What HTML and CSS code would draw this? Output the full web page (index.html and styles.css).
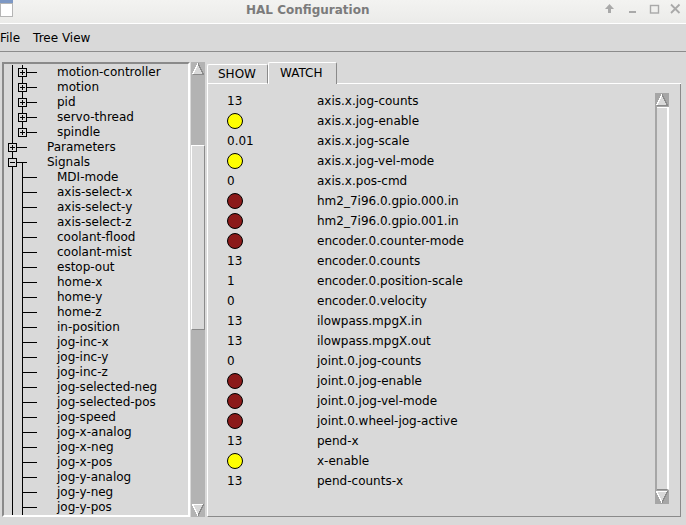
FILE: index.html
```html
<!DOCTYPE html>
<html lang="en">
<head>
    <meta charset="UTF-8">
    <title>HAL Configuration</title>
    <link rel="stylesheet" href="styles.css">
</head>
<body>
    <svg class="defs" width="0" height="0">
        <defs>
            <!-- tree connector pieces, one row = 15px -->
            <symbol id="l2" viewBox="0 0 53 15">
                <path d="M8.5 0V15M18.5 0V15M22 7.5H33" stroke="#000"/>
                <rect x="14.5" y="3.5" width="8" height="8" fill="#d9d9d9" stroke="#000"/>
                <path d="M16 7.5H21M18.5 5V10" stroke="#000"/>
            </symbol>
            <symbol id="l2last" viewBox="0 0 53 15">
                <path d="M8.5 0V15M18.5 0V7.5M22 7.5H33" stroke="#000"/>
                <rect x="14.5" y="3.5" width="8" height="8" fill="#d9d9d9" stroke="#000"/>
                <path d="M16 7.5H21M18.5 5V10" stroke="#000"/>
            </symbol>
            <symbol id="l1plus" viewBox="0 0 43 15">
                <path d="M8.5 0V15M12 7.5H23" stroke="#000"/>
                <rect x="4.5" y="3.5" width="8" height="8" fill="#d9d9d9" stroke="#000"/>
                <path d="M6 7.5H11M8.5 5V10" stroke="#000"/>
            </symbol>
            <symbol id="l1minus" viewBox="0 0 43 15">
                <path d="M8.5 0V15M12 7.5H23M18.5 7.5V15" stroke="#000"/>
                <rect x="4.5" y="3.5" width="8" height="8" fill="#d9d9d9" stroke="#000"/>
                <path d="M6 7.5H11" stroke="#000"/>
            </symbol>
            <symbol id="leaf" viewBox="0 0 53 15">
                <path d="M8.5 0V15M18.5 0V15M18.5 7.5H33" stroke="#000"/>
            </symbol>
            <symbol id="up" viewBox="0 0 14 14">
                <polygon points="7,1.5 1.5,12.5 12.5,12.5" fill="#d9d9d9"/>
                <path d="M1.5 12.5L7 1.5" stroke="#fff" fill="none"/>
                <path d="M7 1.5L12.5 12.5H1.5" stroke="#8a8a8a" fill="none"/>
            </symbol>
            <symbol id="down" viewBox="0 0 14 14">
                <polygon points="1.5,1.5 12.5,1.5 7,12.5" fill="#d9d9d9"/>
                <path d="M7 12.5L1.5 1.5H12.5" stroke="#fff" fill="none"/>
                <path d="M12.5 1.5L7 12.5" stroke="#8a8a8a" fill="none"/>
            </symbol>
        </defs>
    </svg>

    <div class="titlebar">
        <svg class="appicon" width="13" height="17" viewBox="0 0 13 17">
            <rect x="0" y="0" width="13" height="3" fill="#7d98c4"/>
            <rect x="0.5" y="3.5" width="12" height="13" fill="#fff" stroke="#b5b5b5"/>
        </svg>
        <div class="title">HAL Configuration</div>
        <svg class="wbtns" width="80" height="18" viewBox="0 0 80 18">
            <polygon points="6.5,4 2,9 11,9" fill="#a9a9a9"/>
            <rect x="5" y="9" width="3" height="4" fill="#a9a9a9"/>
            <rect x="26" y="11" width="7" height="2" fill="#a9a9a9"/>
            <rect x="47.5" y="5.5" width="8" height="7.5" fill="none" stroke="#a9a9a9" stroke-width="1.4"/>
            <path d="M68 4.5L76.5 13M76.5 4.5L68 13" stroke="#a9a9a9" stroke-width="1.8"/>
        </svg>
    </div>

    <div class="menubar">
        <span class="menu-file">File</span>
        <span class="menu-tree">Tree View</span>
    </div>

    <div class="main">
        <div class="tree">
            <div class="node"><svg class="w2"><use href="#l2"/></svg>motion-controller</div>
            <div class="node"><svg class="w2"><use href="#l2"/></svg>motion</div>
            <div class="node"><svg class="w2"><use href="#l2"/></svg>pid</div>
            <div class="node"><svg class="w2"><use href="#l2"/></svg>servo-thread</div>
            <div class="node"><svg class="w2"><use href="#l2last"/></svg>spindle</div>
            <div class="node"><svg class="w1"><use href="#l1plus"/></svg>Parameters</div>
            <div class="node"><svg class="w1"><use href="#l1minus"/></svg>Signals</div>
            <div class="node"><svg class="w2"><use href="#leaf"/></svg>MDI-mode</div>
            <div class="node"><svg class="w2"><use href="#leaf"/></svg>axis-select-x</div>
            <div class="node"><svg class="w2"><use href="#leaf"/></svg>axis-select-y</div>
            <div class="node"><svg class="w2"><use href="#leaf"/></svg>axis-select-z</div>
            <div class="node"><svg class="w2"><use href="#leaf"/></svg>coolant-flood</div>
            <div class="node"><svg class="w2"><use href="#leaf"/></svg>coolant-mist</div>
            <div class="node"><svg class="w2"><use href="#leaf"/></svg>estop-out</div>
            <div class="node"><svg class="w2"><use href="#leaf"/></svg>home-x</div>
            <div class="node"><svg class="w2"><use href="#leaf"/></svg>home-y</div>
            <div class="node"><svg class="w2"><use href="#leaf"/></svg>home-z</div>
            <div class="node"><svg class="w2"><use href="#leaf"/></svg>in-position</div>
            <div class="node"><svg class="w2"><use href="#leaf"/></svg>jog-inc-x</div>
            <div class="node"><svg class="w2"><use href="#leaf"/></svg>jog-inc-y</div>
            <div class="node"><svg class="w2"><use href="#leaf"/></svg>jog-inc-z</div>
            <div class="node"><svg class="w2"><use href="#leaf"/></svg>jog-selected-neg</div>
            <div class="node"><svg class="w2"><use href="#leaf"/></svg>jog-selected-pos</div>
            <div class="node"><svg class="w2"><use href="#leaf"/></svg>jog-speed</div>
            <div class="node"><svg class="w2"><use href="#leaf"/></svg>jog-x-analog</div>
            <div class="node"><svg class="w2"><use href="#leaf"/></svg>jog-x-neg</div>
            <div class="node"><svg class="w2"><use href="#leaf"/></svg>jog-x-pos</div>
            <div class="node"><svg class="w2"><use href="#leaf"/></svg>jog-y-analog</div>
            <div class="node"><svg class="w2"><use href="#leaf"/></svg>jog-y-neg</div>
            <div class="node"><svg class="w2"><use href="#leaf"/></svg>jog-y-pos</div>
        </div>

        <div class="scrollbar">
            <svg class="arrow"><use href="#up"/></svg>
            <div class="gap-top"></div>
            <div class="slider"></div>
            <div class="gap-bottom"></div>
            <svg class="arrow"><use href="#down"/></svg>
        </div>

        <div class="notebook">
            <div class="tabs">
                <div class="tab">SHOW</div>
                <div class="tab active">WATCH</div>
                <div class="tab-rest"></div>
            </div>
            <div class="panel">
                <div class="watch">
                    <div class="row"><span class="val">13</span><span class="name">axis.x.jog-counts</span></div>
                    <div class="row"><span class="val"><i class="led on"></i></span><span class="name">axis.x.jog-enable</span></div>
                    <div class="row"><span class="val">0.01</span><span class="name">axis.x.jog-scale</span></div>
                    <div class="row"><span class="val"><i class="led on"></i></span><span class="name">axis.x.jog-vel-mode</span></div>
                    <div class="row"><span class="val">0</span><span class="name">axis.x.pos-cmd</span></div>
                    <div class="row"><span class="val"><i class="led off"></i></span><span class="name">hm2_7i96.0.gpio.000.in</span></div>
                    <div class="row"><span class="val"><i class="led off"></i></span><span class="name">hm2_7i96.0.gpio.001.in</span></div>
                    <div class="row"><span class="val"><i class="led off"></i></span><span class="name">encoder.0.counter-mode</span></div>
                    <div class="row"><span class="val">13</span><span class="name">encoder.0.counts</span></div>
                    <div class="row"><span class="val">1</span><span class="name">encoder.0.position-scale</span></div>
                    <div class="row"><span class="val">0</span><span class="name">encoder.0.velocity</span></div>
                    <div class="row"><span class="val">13</span><span class="name">ilowpass.mpgX.in</span></div>
                    <div class="row"><span class="val">13</span><span class="name">ilowpass.mpgX.out</span></div>
                    <div class="row"><span class="val">0</span><span class="name">joint.0.jog-counts</span></div>
                    <div class="row"><span class="val"><i class="led off"></i></span><span class="name">joint.0.jog-enable</span></div>
                    <div class="row"><span class="val"><i class="led off"></i></span><span class="name">joint.0.jog-vel-mode</span></div>
                    <div class="row"><span class="val"><i class="led off"></i></span><span class="name">joint.0.wheel-jog-active</span></div>
                    <div class="row"><span class="val">13</span><span class="name">pend-x</span></div>
                    <div class="row"><span class="val"><i class="led on"></i></span><span class="name">x-enable</span></div>
                    <div class="row"><span class="val">13</span><span class="name">pend-counts-x</span></div>
                </div>
                <div class="scrollbar2">
                    <svg class="arrow"><use href="#up"/></svg>
                    <div class="slider2"></div>
                    <svg class="arrow"><use href="#down"/></svg>
                </div>
            </div>
        </div>
    </div>
</body>
</html>
```

FILE: styles.css
```css
body {
    margin: 0;
    width: 686px;
    height: 525px;
    overflow: hidden;
    background-color: #d9d9d9;
    color: #000;
    font-family: "DejaVu Sans", sans-serif;
    font-size: 12px;
}
.defs {
    display: block;
    width: 0;
    height: 0;
}
svg {
    shape-rendering: crispEdges;
}

/* window title */
.titlebar {
    display: flex;
    align-items: flex-start;
    height: 23px;
    border-bottom: 1px solid #fff;
    background: linear-gradient(#f3f3f1, #ebebe9);
}
.appicon {
    display: block;
}
.title {
    margin-left: 233px;
    margin-top: 3px;
    line-height: 14px;
    font-weight: bold;
    color: #7b7b7b;
}
.wbtns {
    display: block;
    margin-left: auto;
    margin-right: 3px;
    shape-rendering: auto;
}

/* menu */
.menubar {
    display: flex;
    align-items: center;
    height: 27px;
    border-bottom: 1px solid #8c8c8c;
}
.menu-file {
    margin-left: 0;
}
.menu-tree {
    margin-left: 13px;
}

.main {
    display: flex;
    align-items: flex-start;
    padding: 10px 0 0 2px;
}

/* tree */
.tree {
    box-sizing: border-box;
    width: 188px;
    height: 455px;
    padding-top: 1px;
    overflow: hidden;
    border: 2px solid;
    border-color: #8a8a8a #fff #fff #8a8a8a;
}
.node {
    display: flex;
    align-items: center;
    height: 15px;
    line-height: 15px;
    white-space: nowrap;
}
.node svg {
    flex: none;
    height: 15px;
}
.w2 {
    width: 53px;
}
.w1 {
    width: 43px;
}

/* scrollbars */
.scrollbar {
    display: flex;
    flex-direction: column;
    width: 14px;
    height: 455px;
    margin-left: 1px;
    background-color: #b3b3b3;
}
.arrow {
    display: block;
    flex: none;
    width: 14px;
    height: 14px;
}
.gap-top {
    height: 69px;
}
.slider {
    box-sizing: border-box;
    height: 185px;
    background-color: #d9d9d9;
    border: 1px solid;
    border-color: #fff #8a8a8a #8a8a8a #fff;
}
.gap-bottom {
    flex: 1;
}

/* notebook */
.notebook {
    width: 474px;
    margin-left: 2px;
}
.tabs {
    display: flex;
    align-items: flex-end;
    height: 22px;
}
.tab {
    box-sizing: border-box;
    width: 61px;
    height: 20px;
    padding-left: 10px;
    line-height: 18px;
    border: 1px solid #fff;
    border-right-color: #8a8a8a;
    border-radius: 2px 2px 0 0;
}
.tab.active {
    width: 69px;
    height: 22px;
    padding-left: 11px;
    line-height: 20px;
    border-bottom: none;
}
.tab-rest {
    flex: 1;
    border-bottom: 1px solid #fff;
}
.panel {
    box-sizing: border-box;
    display: flex;
    align-items: flex-start;
    height: 433px;
    border: 1px solid;
    border-color: transparent #8a8a8a #8a8a8a #fff;
    border-top: none;
}
.watch {
    flex: 1;
    margin-top: 7px;
    padding-left: 19px;
}
.row {
    display: flex;
    align-items: center;
    height: 20px;
    white-space: nowrap;
}
.val {
    display: flex;
    align-items: center;
    width: 90px;
}
.led {
    display: block;
    box-sizing: border-box;
    width: 16px;
    height: 16px;
    border: 1px solid #000;
    border-radius: 50%;
}
.led.on {
    background-color: #ffff00;
}
.led.off {
    background-color: #8b1a1a;
}
.scrollbar2 {
    display: flex;
    flex-direction: column;
    width: 14px;
    height: 411px;
    margin: 9px 11px 0 0;
    background-color: #a6a6a6;
}
.slider2 {
    flex: 1;
    box-sizing: border-box;
    margin-left: 2px;
    background-color: #d9d9d9;
    border-top: 1px solid #fff;
    border-right: 2px solid #fff;
    border-bottom: 1px solid #8a8a8a;
}
```
